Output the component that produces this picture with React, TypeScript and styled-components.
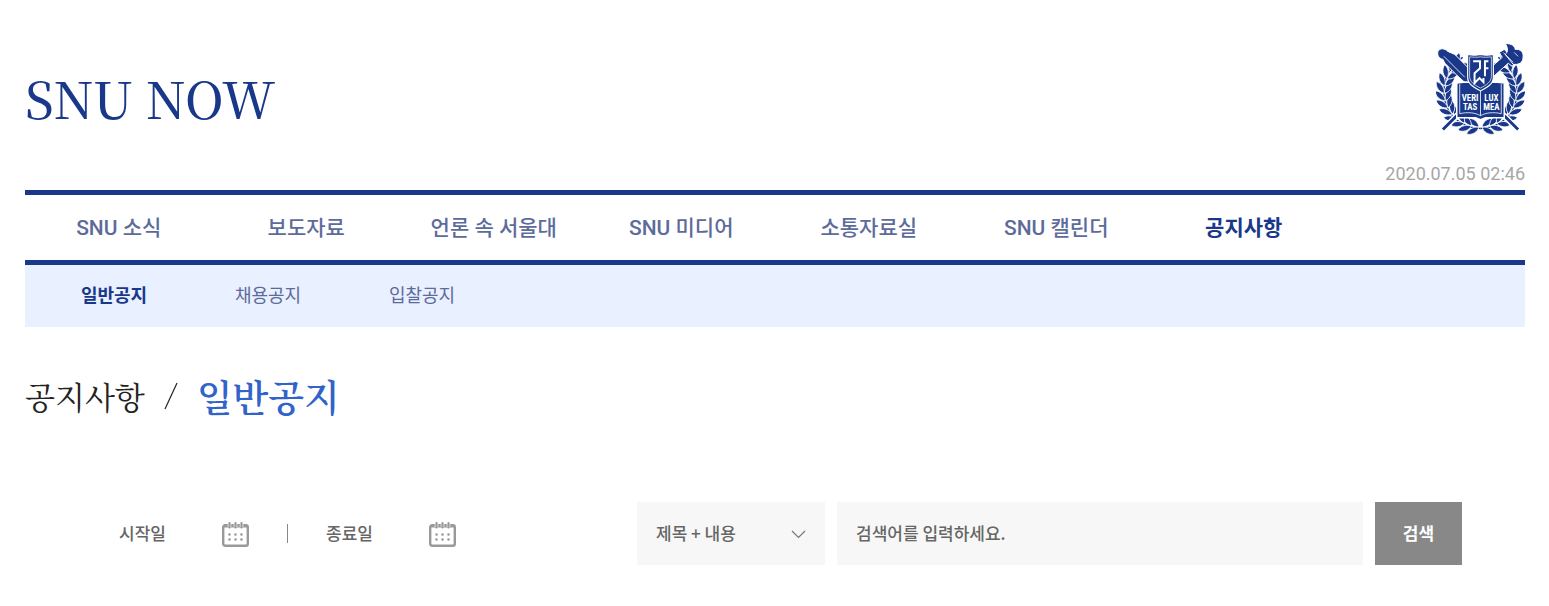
import React from "react";
import styled, { createGlobalStyle } from "styled-components";

const NAVY = "#1a3889";
const SANS = `Roboto, "Noto Sans CJK KR", sans-serif`;
const KSANS = `"Noto Sans CJK KR", sans-serif`;
const SERIF = `"Noto Serif CJK KR", "Noto Serif KR", serif`;

const GlobalStyle = createGlobalStyle`
  * { box-sizing: border-box; }
  body { margin: 0; background: #fff; font-family: ${SANS}; }
  button, input, select { font-family: inherit; border: 0; border-radius: 0; margin: 0; }
  h1, h2, p, ul { margin: 0; padding: 0; }
  a { color: inherit; text-decoration: none; }
`;

const Page = styled.div`
  padding: 40px 24px 40px 25px;
`;

const Header = styled.header`
  display: flex;
  justify-content: space-between;
  height: 150px;
`;

const SiteTitle = styled.h1`
  padding-top: 25px;
  font: 500 50px/64px ${SERIF};
  color: ${NAVY};
`;

const HeaderSide = styled.div`
  display: flex;
  flex-direction: column;
  align-items: flex-end;
  justify-content: space-between;
  padding: 3px 0 4px;
`;

const Clock = styled.time`
  font-size: 18px;
  line-height: 24px;
  color: #a6a6a6;
`;

const MainNav = styled.nav`
  border-top: 5px solid ${NAVY};
  border-bottom: 5px solid ${NAVY};
`;

const NavList = styled.ul`
  display: grid;
  grid-template-columns: repeat(8, 1fr);
  list-style: none;
`;

const NavLink = styled.a<{ $active?: boolean }>`
  display: block;
  padding-top: 1px;
  font-size: 21px;
  line-height: 64px;
  text-align: center;
  white-space: nowrap;
  font-weight: ${(p) => (p.$active ? 700 : 500)};
  color: ${(p) => (p.$active ? NAVY : "#5d6b9b")};
`;

const SubNav = styled.nav`
  background: #e9f0ff;
`;

const SubList = styled.ul`
  display: flex;
  padding: 0 12px;
  list-style: none;
`;

const SubLink = styled.a<{ $active?: boolean }>`
  display: block;
  width: 154px;
  font-size: 18px;
  line-height: 62px;
  text-align: center;
  font-weight: ${(p) => (p.$active ? 700 : 400)};
  color: ${(p) => (p.$active ? NAVY : "#5d6b9b")};
`;

const Crumbs = styled.div`
  display: flex;
  align-items: center;
  gap: 19px;
  height: 64px;
  margin-top: 37px;
  font-family: ${SERIF};
`;

const Section = styled.p`
  font-size: 31px;
  line-height: 48px;
  font-weight: 400;
  color: #222;
`;

const Current = styled.h2`
  font-size: 37px;
  line-height: 48px;
  font-weight: 600;
  color: #3163c9;
`;

const SearchForm = styled.form`
  display: flex;
  align-items: center;
  gap: 12px;
  margin-top: 74px;
  padding: 0 63px 0 94px;
  color: #666;
  font-family: ${KSANS};
`;

const DateRange = styled.div`
  display: flex;
  align-items: center;
  gap: 38px;
  margin-right: auto;
`;

const DateField = styled.div`
  display: flex;
  align-items: center;
`;

const DateInput = styled.input`
  width: 103px;
  height: 40px;
  padding: 0 0 2px;
  background: none;
  font-size: 17px;
  font-weight: 500;
  &::placeholder { color: #666; opacity: 1; }
`;

const IconButton = styled.button`
  display: flex;
  padding: 0;
  background: none;
`;

const Divider = styled.span`
  width: 1px;
  height: 19px;
  background: #888;
`;

const SelectBox = styled.div`
  position: relative;
  flex: 0 0 188px;
`;

const Select = styled.select`
  appearance: none;
  display: block;
  width: 100%;
  height: 63px;
  padding: 0 40px 2px 19px;
  background: #f7f7f7;
  color: #666;
  font-size: 17px;
  font-weight: 500;
`;

const Chevron = styled.svg`
  position: absolute;
  right: 19px;
  top: 28px;
  pointer-events: none;
`;

const Keyword = styled.input`
  flex: 0 1 526px;
  min-width: 0;
  height: 63px;
  padding: 0 19px 2px;
  background: #f7f7f7;
  color: #666;
  font-size: 17px;
  font-weight: 500;
  &::placeholder { color: #666; opacity: 1; }
`;

const Submit = styled.button`
  flex: 0 0 87px;
  height: 63px;
  padding: 0 0 2px;
  background: #888;
  color: #fff;
  font-size: 17px;
  font-weight: 700;
`;

const LEAVES = Array.from({ length: 12 }, (_, i) => 4 + i * 12.2);

function WreathHalf() {
  return (
    <g>
      <path d="M45 86C22 85 8 69 8 49C8 34 15 22 27 14" fill="none" stroke={NAVY} strokeWidth="1.4" />
      {LEAVES.map((deg) => {
        const t = ((90 + deg) * Math.PI) / 180;
        const x = 45 + 36.5 * Math.cos(t);
        const y = 49 + 35.5 * Math.sin(t);
        return (
          <g key={deg} transform={`translate(${x} ${y}) rotate(${deg + 180})`} fill={NAVY} stroke="#fff" strokeWidth=".8">
            <path d="M-1 0C0 -5 5 -9 11 -8C10 -4 6 0 -1 0Z" />
            <path d="M-1 0C0 5 5 9 11 8C10 4 6 0 -1 0Z" />
          </g>
        );
      })}
    </g>
  );
}

function Emblem() {
  return (
    <svg width="89" height="92" viewBox="0 0 90 92" role="img" aria-label="서울대학교">
      <WreathHalf />
      <g transform="translate(90 0) scale(-1 1)">
        <WreathHalf />
      </g>
      <g stroke="#fff" strokeWidth="1" fill={NAVY}>
        <path d="M2 8C4 4 9 5 12 8L19 11L33 25L42 38L32 42L21 32L9 20L7 16C3 15 1 12 2 8Z" />
        <path d="M53 38L48 31L67 14L64 9L69 6L81 18L77 23L73 20Z" />
        <path d="M70 11C74 8 72 3 70 0C77 0 80 3 80 6C85 5 89 9 88 14C88 19 84 22 78 21Z" />
      </g>
      <path d="M8 13L29 34M68 9L78 19M79 9L83 13" stroke="#fff" strokeWidth=".8" />
      <path d="M27 67L7 87M63 67L83 87" stroke="#fff" strokeWidth="6" />
      <path d="M27 67L7 87M63 67L83 87" stroke={NAVY} strokeWidth="3" />
      <path d="M21 40L30 39C36 39 42 40 45 42C48 40 54 39 60 39L69 40V75H50L45 77L40 75H21Z" fill={NAVY} stroke="#fff" strokeWidth="1.500" />
      <path d="M24 41V71C32 69 40 70 45 73C50 70 58 69 66 71V41M45 42V73" fill="none" stroke="#fff" strokeWidth=".8" />
      <path d="M32 11C37 12 41 12 45 11C49 12 53 12 58 11V34C58 41 52 44 45 48C38 44 32 41 32 34Z" fill={NAVY} stroke="#fff" strokeWidth="1.200" />
      <path d="M34 13.500C39 14 42 14 45 13.500C48 14 51 14 56 13.500V33C56 39 51 42 45 45C39 42 34 39 34 33Z" fill="none" stroke="#fff" strokeWidth=".7" />
      <path d="M37.500 18H44.500V25L39 30V40L44 35L48 39V35M53 18H49.500V33M49 25H53" fill="none" stroke="#fff" strokeWidth="2" />
      <g fill="#fff" fontFamily="Roboto Condensed, Open Sans Condensed, DejaVu Sans Condensed, Roboto" fontSize="9" fontWeight="700" textAnchor="middle">
        <text x="34.500" y="58">VERI</text>
        <text x="56" y="58">LUX</text>
        <text x="34.500" y="67">TAS</text>
        <text x="56" y="67">MEA</text>
      </g>
    </svg>
  );
}

function CalendarIcon() {
  return (
    <svg width="27" height="27" viewBox="0 0 27 27" fill="none" stroke="#999" aria-hidden="true">
      <rect x="1.200" y="5.200" width="24.600" height="20.600" rx="2" strokeWidth="2.400" />
      <path d="M2 6H25" strokeWidth="3" />
      <path d="M7.500 2.500V7M13.500 2.500V7M19.500 2.500V7" stroke="#fff" strokeWidth="3.500" />
      <path d="M7.500 3V7.500M13.500 3V7.500M19.500 3V7.500" strokeWidth="2.200" strokeLinecap="round" />
      <path d="M7.500 14.500H7.510M13.500 14.500H13.510M19.500 14.500H19.510M7.500 19.500H7.510M13.500 19.500H13.510M19.500 19.500H19.510" strokeWidth="2.600" strokeLinecap="round" />
    </svg>
  );
}

const MENU = ["SNU 소식", "보도자료", "언론 속 서울대", "SNU 미디어", "소통자료실", "SNU 캘린더", "공지사항"];
const SUBMENU = ["일반공지", "채용공지", "입찰공지"];

export default function App() {
  return (
    <>
      <GlobalStyle />
      <Page>
        <Header>
          <SiteTitle>SNU NOW</SiteTitle>
          <HeaderSide>
            <Emblem />
            <Clock dateTime="2020-07-05T02:46">2020.07.05 02:46</Clock>
          </HeaderSide>
        </Header>
        <MainNav>
          <NavList>
            {MENU.map((name) => (
              <li key={name}>
                <NavLink href="#" $active={name === "공지사항"}>{name}</NavLink>
              </li>
            ))}
          </NavList>
        </MainNav>
        <SubNav>
          <SubList>
            {SUBMENU.map((name) => (
              <li key={name}>
                <SubLink href="#" $active={name === "일반공지"}>{name}</SubLink>
              </li>
            ))}
          </SubList>
        </SubNav>
        <Crumbs>
          <Section>공지사항</Section>
          <svg width="14" height="28" viewBox="0 0 14 28" aria-hidden="true">
            <path d="M13 1L1 27" stroke="#222" strokeWidth="1.200" />
          </svg>
          <Current>일반공지</Current>
        </Crumbs>
        <SearchForm onSubmit={(e) => e.preventDefault()}>
          <DateRange>
            <DateField>
              <DateInput placeholder="시작일" aria-label="시작일" />
              <IconButton type="button" aria-label="시작일 선택"><CalendarIcon /></IconButton>
            </DateField>
            <Divider />
            <DateField>
              <DateInput placeholder="종료일" aria-label="종료일" />
              <IconButton type="button" aria-label="종료일 선택"><CalendarIcon /></IconButton>
            </DateField>
          </DateRange>
          <SelectBox>
            <Select aria-label="검색 범위">
              <option>제목 + 내용</option>
            </Select>
            <Chevron width="15" height="9" viewBox="0 0 15 9" fill="none" stroke="#777">
              <path d="M1 1L7.500 7.500L14 1" strokeWidth="1.200" />
            </Chevron>
          </SelectBox>
          <Keyword placeholder="검색어를 입력하세요." aria-label="검색어" />
          <Submit type="submit">검색</Submit>
        </SearchForm>
      </Page>
    </>
  );
}
